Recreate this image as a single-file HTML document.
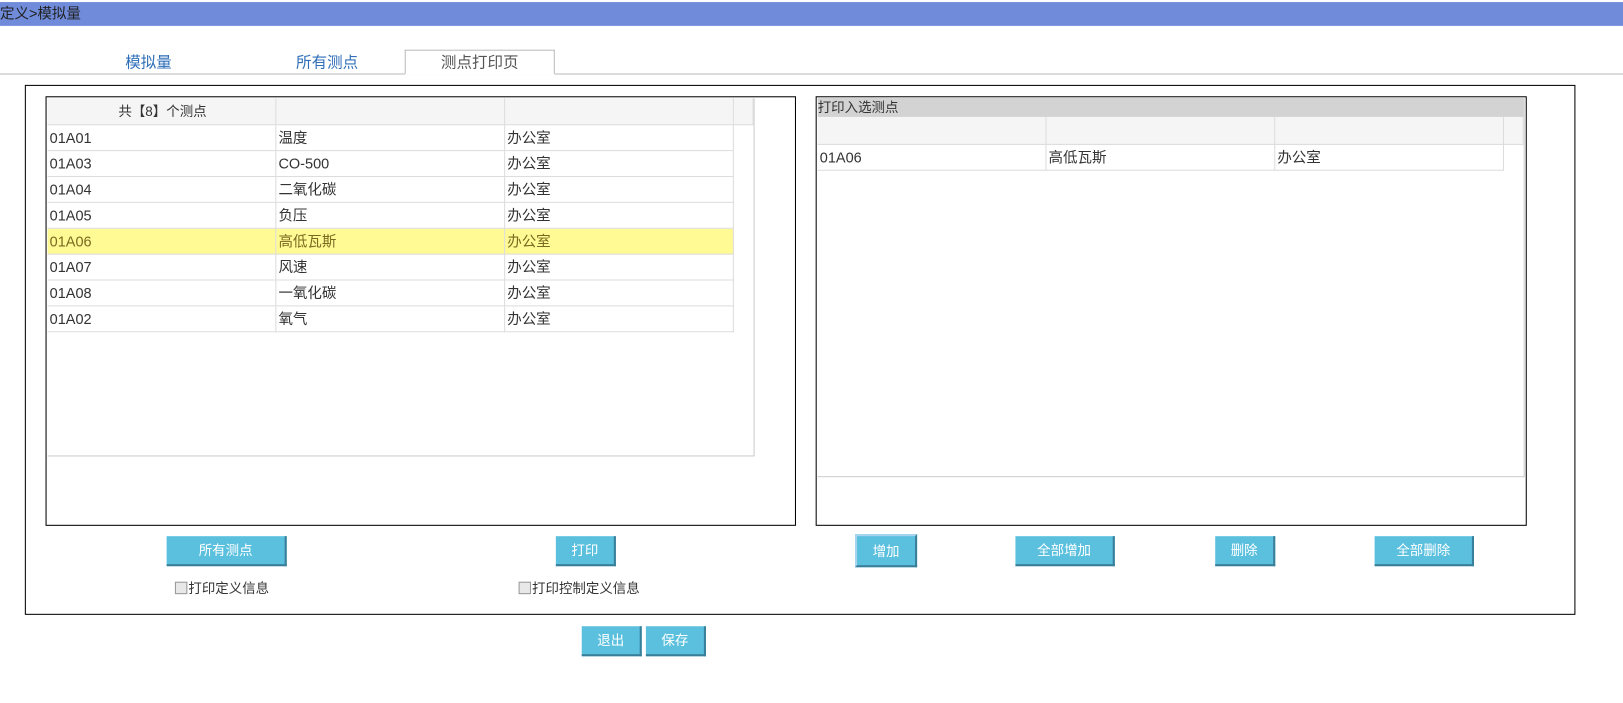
<!DOCTYPE html>
<html><head><meta charset="utf-8"><style>
body{margin:0;width:1623px;height:703px;position:relative;background:#fff;font-family:"Liberation Sans","Noto Sans CJK SC",sans-serif;font-size:14px;color:#333;overflow:hidden}
#w{position:absolute;left:0;top:0;width:1568px;height:679px;transform:scale(1.0351);transform-origin:0 0}
.a{position:absolute}
.bar{left:0;top:2px;width:1568px;height:23px;background:#6f8bd9;color:#222;line-height:23px;font-size:14px}
.tabline{left:0;top:71px;width:1568px;height:1px;background:#bbb}
.tab{top:48px;height:24px;line-height:26px;font-size:15px;color:#2f6fb8}
.box{border:1px solid #000;box-sizing:border-box}
.cell{position:absolute;height:25px;line-height:25px;border-right:1px solid #ddd;border-bottom:1px solid #ddd;box-sizing:border-box;padding-left:2px;white-space:nowrap}
.btn{position:absolute;background:#5bc0de;color:#fff;text-align:center;font-size:13px;box-sizing:border-box;border-right:2px solid #3a7f99;border-bottom:2px solid #3a7f99}
.cb{position:absolute;font-size:13px;color:#333}
.cb i{display:inline-block;width:10px;height:10px;border:1px solid #999;background:#e8e8e8;vertical-align:-1px;margin-right:1px}
</style></head><body><div id="w">
<div class="a bar">定义&gt;模拟量</div>
<div class="a tabline"></div>
<div class="a tab" style="left:121px">模拟量</div>
<div class="a tab" style="left:286px">所有测点</div>
<div class="a" style="left:391px;top:48px;width:145px;height:24px;border:1px solid #bbb;border-bottom:1px solid #fff;box-sizing:border-box;background:#fff;text-align:center;line-height:24px;font-size:15px;color:#555">测点打印页</div>

<div class="a box" style="left:24px;top:82px;width:1498px;height:512px"></div>
<div class="a box" style="left:44px;top:93px;width:725px;height:415px"></div>
<div class="a" style="left:46px;top:95px;width:683px;height:346px;border-right:1px solid #ccc;border-bottom:1px solid #ccc;box-sizing:border-box">
<div class="a" style="left:0;top:0;width:682px;height:26px;background:#f5f5f5"></div>
<div class="cell" style="left:0;top:0;width:221px;height:26px;line-height:26px;text-align:center;font-size:13px">共【8】个测点</div>
<div class="cell" style="left:221px;top:0;width:221px;height:26px"></div>
<div class="cell" style="left:442px;top:0;width:221px;height:26px"></div>
<div class="cell" style="left:663px;top:0;width:19px;height:26px"></div>
<div class="a" style="left:0;top:126px;width:663px;height:25px;background:#fffa94"></div>
</div>
<div id="L" class="a" style="left:46px;top:121px"></div>

<div class="a box" style="left:788px;top:93px;width:687px;height:415px"></div>
<div class="a" style="left:790px;top:94px;width:683px;height:367px;border-right:1px solid #ccc;border-bottom:1px solid #ccc;box-sizing:border-box">
<div class="a" style="left:0;top:0;width:682px;height:19px;background:#d3d3d3;line-height:20px;font-size:13px">打印入选测点</div>
<div class="a" style="left:0;top:19px;width:682px;height:27px;background:#f5f5f5"></div>
<div class="cell" style="left:0;top:19px;width:221px;height:27px"></div>
<div class="cell" style="left:221px;top:19px;width:221px;height:27px"></div>
<div class="cell" style="left:442px;top:19px;width:221px;height:27px"></div>
<div class="cell" style="left:663px;top:19px;width:19px;height:27px"></div>
<div class="cell" style="left:0;top:46px;width:221px">01A06</div>
<div class="cell" style="left:221px;top:46px;width:221px">高低瓦斯</div>
<div class="cell" style="left:442px;top:46px;width:221px">办公室</div>
</div>

<div class="btn" style="left:161px;top:518px;width:116px;height:29px;line-height:28px">所有测点</div>
<div class="btn" style="left:537px;top:518px;width:58px;height:29px;line-height:28px">打印</div>
<div class="btn" style="left:826px;top:516px;width:60px;height:32px;line-height:30px;border:2px solid #a9d4ef;border-right:2px solid #3a7f99;border-bottom:2px solid #3a7f99">增加</div>
<div class="btn" style="left:981px;top:518px;width:96px;height:29px;line-height:28px">全部增加</div>
<div class="btn" style="left:1174px;top:518px;width:58px;height:29px;line-height:28px">删除</div>
<div class="btn" style="left:1328px;top:518px;width:96px;height:29px;line-height:28px">全部删除</div>
<div class="cb" style="left:169px;top:558px"><i></i>打印定义信息</div>
<div class="cb" style="left:501px;top:558px"><i></i>打印控制定义信息</div>
<div class="btn" style="left:562px;top:605px;width:58px;height:29px;line-height:28px">退出</div>
<div class="btn" style="left:624px;top:605px;width:58px;height:29px;line-height:28px">保存</div>
</div>
<script>
var d=[["01A01","温度"],["01A03","CO-500"],["01A04","二氧化碳"],["01A05","负压"],["01A06","高低瓦斯"],["01A07","风速"],["01A08","一氧化碳"],["01A02","氧气"]],h="";
d.forEach(function(r,i){var y=i*25,c=i==4?"color:#7a6a20;":"";h+='<div class="cell" style="'+c+'left:0;top:'+y+'px;width:221px">'+r[0]+'</div><div class="cell" style="'+c+'left:221px;top:'+y+'px;width:221px">'+r[1]+'</div><div class="cell" style="'+c+'left:442px;top:'+y+'px;width:221px">办公室</div>';});
document.getElementById("L").innerHTML=h;
</script>
</body></html>
